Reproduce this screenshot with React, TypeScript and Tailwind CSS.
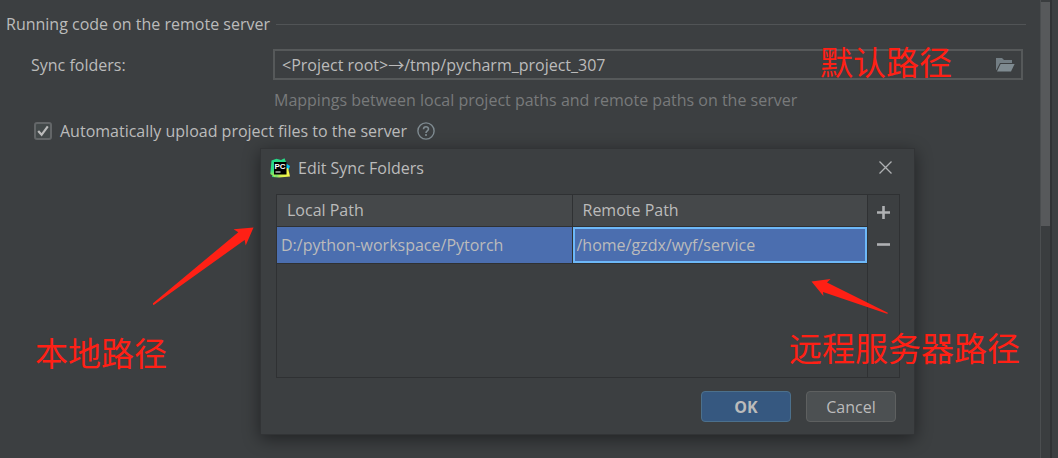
import { useState } from "react";
import type { ReactNode } from "react";

type Mapping = {
	local: string;
	remote: string;
};

const mappings: Mapping[] = [
	{ local: "D:/python-workspace/Pytorch", remote: "/home/gzdx/wyf/service" },
];

function PyCharmIcon() {
	return (
		<svg width="20" height="20" viewBox="0 0 20 20" aria-hidden="true">
			<defs>
				<linearGradient id="pc-left" x1="0" y1="0" x2="0.3" y2="1">
					<stop offset="0" stopColor="#21d789" />
					<stop offset="0.6" stopColor="#2fdc84" />
					<stop offset="1" stopColor="#c8ef4b" />
				</linearGradient>
				<linearGradient id="pc-base" x1="0" y1="0" x2="1" y2="0">
					<stop offset="0" stopColor="#21d789" />
					<stop offset="0.5" stopColor="#d6f04c" />
					<stop offset="1" stopColor="#fcf84a" />
				</linearGradient>
			</defs>
			<path d="M16 5.5 L20 8 L18.5 12 L15 12 Z" fill="#07c3f2" />
			<path d="M15 11 L18 10 L20 18.6 L9 19.4 L2 19 L3 15 Z" fill="url(#pc-base)" />
			<path d="M1.5 2.5 L6.5 0.8 L11 2 L14.5 0.2 L16 4 L10 8 L5 19 L0.3 16 Z" fill="url(#pc-left)" />
			<rect x="4" y="4" width="12.5" height="12.5" fill="#000" />
			<text x="4.4" y="10.8" fontSize="8" fontWeight="700" fill="#fff" fontFamily="Liberation Sans, sans-serif">
				PC
			</text>
			<rect x="5.5" y="13.4" width="5" height="1.2" fill="#ddd" />
		</svg>
	);
}

function FolderIcon() {
	return (
		<svg width="20" height="16" viewBox="0 0 20 16" aria-hidden="true">
			<path d="M1 1 H7 L9 3 H17 V6 H5 L1.4 13 H1 Z" fill="#737e84" />
			<path d="M5.6 7 H19.6 L16 14.5 H2 Z" fill="#7f8b91" />
		</svg>
	);
}

function HelpIcon() {
	return (
		<svg width="18" height="18" viewBox="0 0 18 18" fill="none" aria-hidden="true">
			<circle cx="9" cy="9" r="8.1" stroke="#7f8b91" strokeWidth="1.4" />
			<path
				d="M6.5 7.2 C6.5 3.9 11.5 3.9 11.5 7 C11.5 8.9 9 8.9 9 11"
				stroke="#7f8b91"
				strokeWidth="1.6"
			/>
			<rect x="8.1" y="12.1" width="1.8" height="1.8" fill="#7f8b91" />
		</svg>
	);
}

function ToolButton({ label, children }: { label: string; children: ReactNode }) {
	return (
		<button type="button" aria-label={label} className="flex h-8 w-full items-center justify-center">
			<svg width="13" height="13" viewBox="0 0 13 13" stroke="#afb1b3" strokeWidth="2.6" aria-hidden="true">
				{children}
			</svg>
		</button>
	);
}

function SyncFoldersDialog() {
	const [rows, setRows] = useState(mappings);

	const editRemote = (index: number, remote: string) =>
		setRows(rows.map((row, i) => (i === index ? { ...row, remote } : row)));

	return (
		<section
			role="dialog"
			aria-labelledby="dialog-title"
			className="absolute top-[148px] right-[143px] left-[260px] border border-[#323436] bg-[#3c3f41] pr-3.5 pb-3 pl-[15px] shadow-[0_4px_16px_rgba(0,0,0,0.45)]"
		>
			<header className="flex h-[45px] items-center pb-2">
				<div className="-ml-1.5 flex flex-1 items-center gap-2">
					<PyCharmIcon />
					<h2 id="dialog-title">Edit Sync Folders</h2>
				</div>
				<button type="button" aria-label="Close" className="mr-2">
					<svg width="13" height="13" viewBox="0 0 13 13" stroke="#afb1b3" strokeWidth="1.3" aria-hidden="true">
						<path d="M0.5 0.5 L12.5 12.5 M12.5 0.5 L0.5 12.5" />
					</svg>
				</button>
			</header>

			<div className="flex h-46 border border-[#2f3133]">
				<div className="flex-1 border-r border-[#2f3133]">
					<table className="w-full table-fixed border-collapse text-left">
						<thead>
							<tr className="h-[31px] border-b border-[#2f3133] bg-[#45484a]">
								<th className="border-r border-[#2f3133] px-2.5 font-normal">Local Path</th>
								<th className="px-2.5 font-normal">Remote Path</th>
							</tr>
						</thead>
						<tbody>
							{rows.map((row, i) => (
								<tr key={row.local} className="h-9 border-b border-[#2f3133] bg-[#4b6eaf]">
									<td className="border-r border-[#2f3133] px-1">{row.local}</td>
									<td>
										<input
											aria-label="Remote Path"
											value={row.remote}
											onChange={(e) => editRemote(i, e.target.value)}
											className="block h-9 w-full border-2 border-[#6db8f8] bg-transparent px-0.5 outline-none"
										/>
									</td>
								</tr>
							))}
						</tbody>
					</table>
				</div>
				<div className="w-[31px] pt-px">
					<ToolButton label="Add">
						<path d="M6.5 0 V13 M0 6.5 H13" />
					</ToolButton>
					<ToolButton label="Remove">
						<path d="M0 6.5 H13" />
					</ToolButton>
				</div>
			</div>

			<footer className="mt-[13px] mr-1 flex justify-end gap-[15px]">
				<button type="button" className="h-[31px] w-[90px] rounded border border-[#4c708c] bg-[#365880] font-bold leading-none">
					OK
				</button>
				<button type="button" className="h-[31px] w-[90px] rounded border border-[#5e6060] bg-[#4c5052] leading-none">
					Cancel
				</button>
			</footer>
		</section>
	);
}

/** Red callouts drawn over the settings page. */
function Annotations() {
	const note = "absolute whitespace-nowrap text-[33px] leading-10 text-[#ff2015]";

	return (
		<div className="pointer-events-none absolute inset-0 font-['Noto_Sans_CJK_SC',sans-serif]">
			<p className={`${note} top-[41px] left-[820px]`}>默认路径</p>
			<p className={`${note} top-[332px] left-[35px]`}>本地路径</p>
			<p className={`${note} top-[327px] left-[789px]`}>远程服务器路径</p>
			<svg className="absolute top-[226px] left-[152px]" width="103" height="81" viewBox="152 226 103 81" fill="#ff2015" aria-hidden="true">
				<path d="M253.5 227.6 L233.6 229.3 L238.3 232.2 L153 303.2 Q152.6 304.8 153.8 305 L244.6 240 L245.7 245.5 Z" />
			</svg>
			<svg className="absolute top-[278px] left-[810px]" width="80" height="38" viewBox="810 278 80 38" fill="#ff2015" aria-hidden="true">
				<path d="M811.5 281.6 L830.5 279 L827 282.5 L887.8 312.8 Q888.4 313.8 887 313.8 L823 292 L823.4 296 Z" />
			</svg>
		</div>
	);
}

export default function App() {
	const [folders, setFolders] = useState("<Project root>→/tmp/pycharm_project_307");
	const [autoUpload, setAutoUpload] = useState(true);

	return (
		<div className="relative flex min-h-screen overflow-hidden bg-[#3c3f41] font-['Open_Sans','Noto_Sans_CJK_SC',sans-serif] text-base leading-6 text-[#bbbbbb]">
			<main className="flex-1 pt-3 pr-3.5 pl-1.5">
				<div className="flex items-center gap-1.5">
					<h1>Running code on the remote server</h1>
					<div className="h-px flex-1 bg-[#515456]" />
				</div>

				<div className="mt-[13px] mr-[3px] ml-[25px] flex items-center">
					<label htmlFor="folders" className="w-[242px]">
						Sync folders:
					</label>
					<div className="flex h-[31px] flex-1 items-center border-2 border-[#56595a] pr-1.5 pl-[7px]">
						<input
							id="folders"
							value={folders}
							onChange={(e) => setFolders(e.target.value)}
							className="min-w-0 flex-1 bg-transparent outline-none"
						/>
						<button type="button" aria-label="Browse">
							<FolderIcon />
						</button>
					</div>
				</div>
				<p className="mt-2 ml-[268px] text-[#787a7b]">
					Mappings between local project paths and remote paths on the server
				</p>

				<div className="mt-[7px] ml-7 flex items-center">
					<label className="flex items-center gap-2">
						<span className="relative flex">
							<input
								type="checkbox"
								checked={autoUpload}
								onChange={(e) => setAutoUpload(e.target.checked)}
								className="peer size-[18px] appearance-none rounded-[3px] border-2 border-[#636668] bg-[#43494a]"
							/>
							<svg
								className="pointer-events-none absolute inset-0 hidden peer-checked:block"
								width="18"
								height="18"
								viewBox="0 0 18 18"
								fill="none"
								aria-hidden="true"
							>
								<path d="M4.2 9 L7.6 12.8 L13.8 4.4" stroke="#bbbbbb" strokeWidth="2.2" />
							</svg>
						</span>
						Automatically upload project files to the server
					</label>
					<button type="button" aria-label="Help" className="ml-2.5">
						<HelpIcon />
					</button>
				</div>
			</main>

			<div className="w-2.5 border-l border-[#4b4e50] bg-[#3a3d3f] pt-0.5">
				<div className="h-56 bg-[#57595b]" />
			</div>
			<div className="w-2 border-l-2 border-[#303234]" />

			<SyncFoldersDialog />
			<Annotations />
		</div>
	);
}
